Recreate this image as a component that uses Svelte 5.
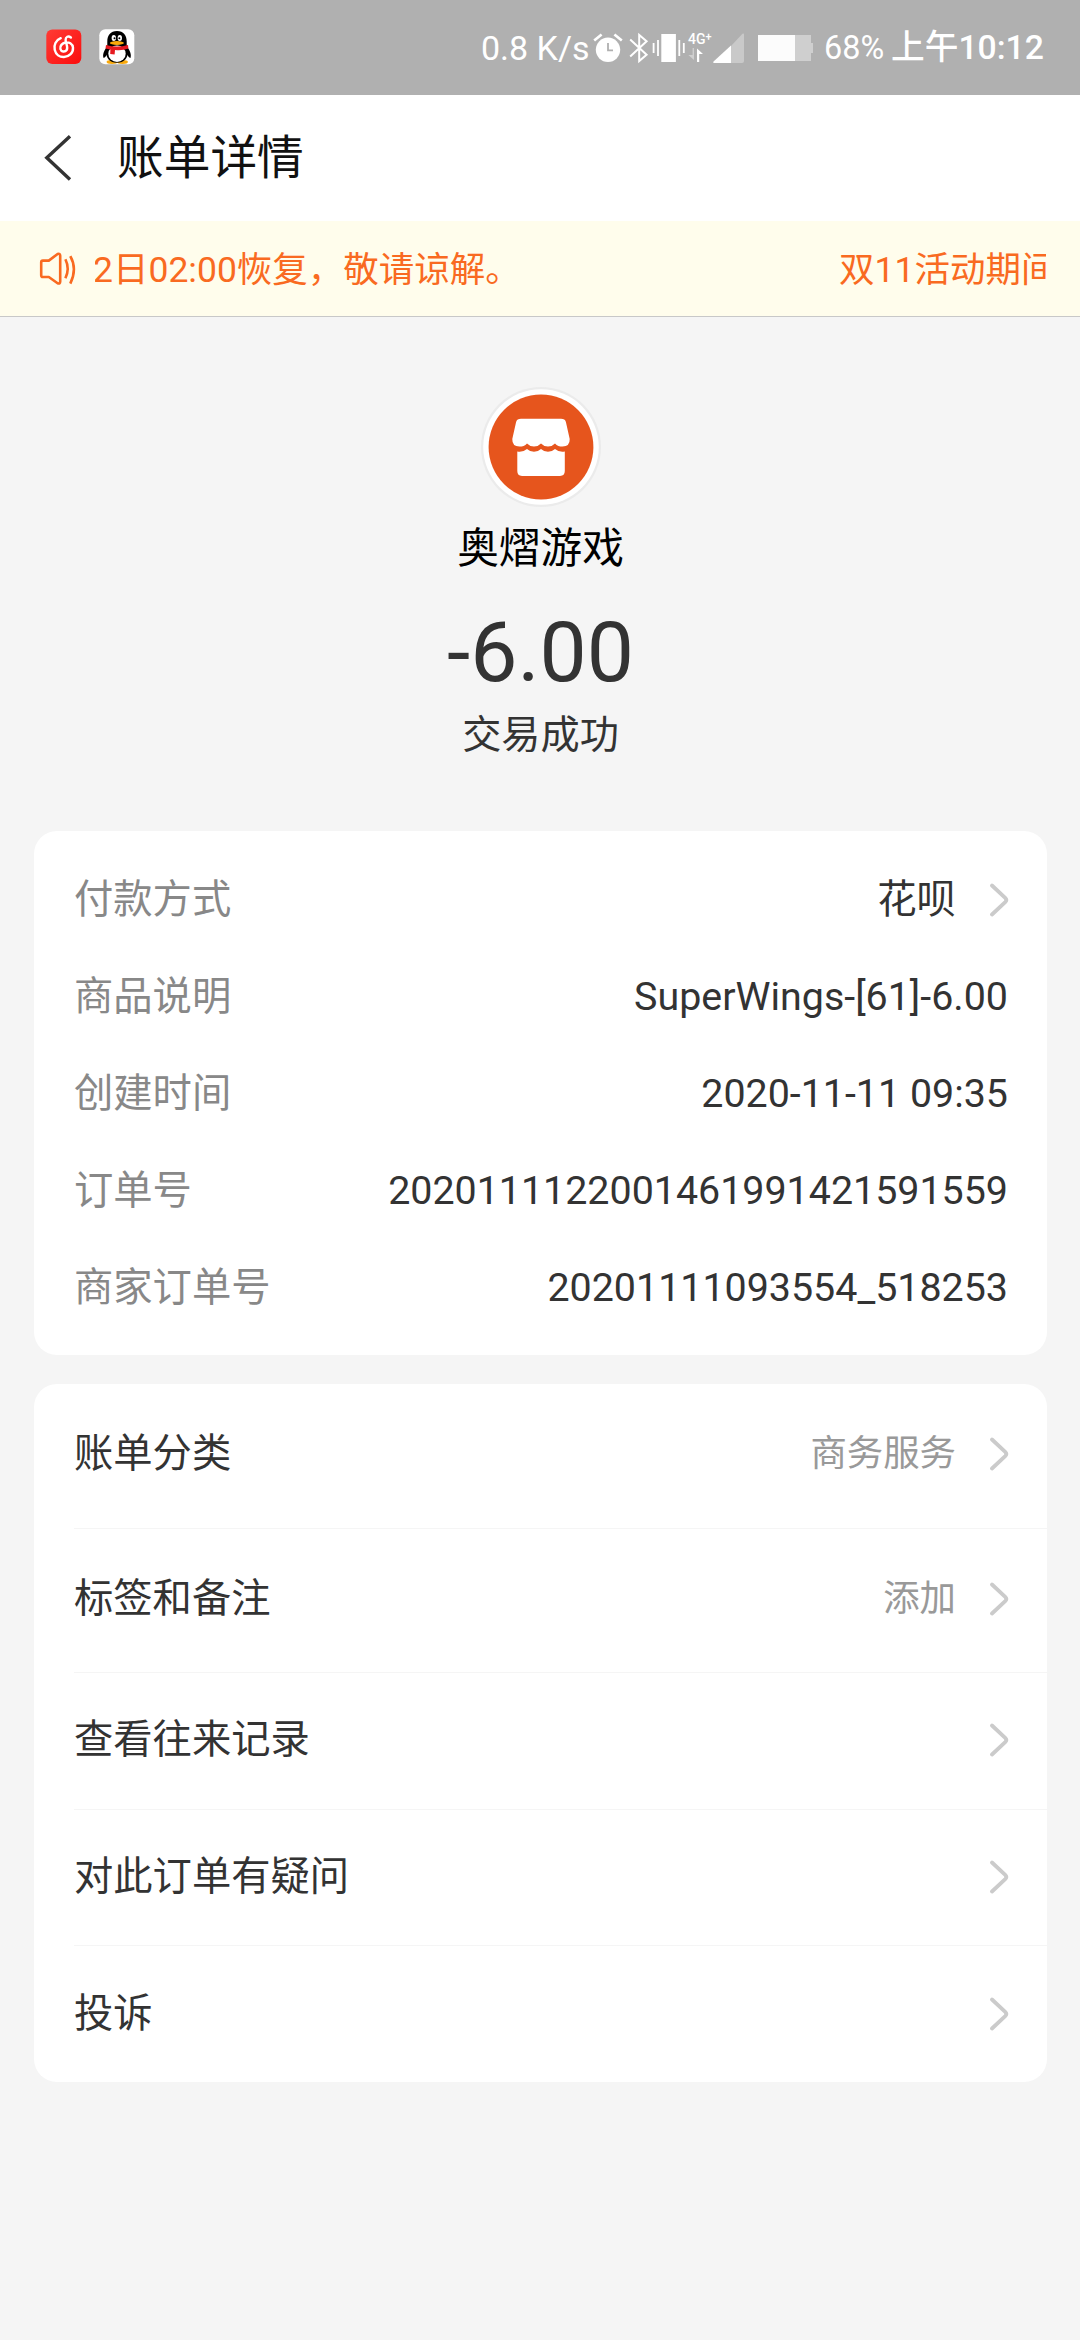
<script>
  const details = [
    { label: '付款方式', value: '花呗', link: true },
    { label: '商品说明', value: 'SuperWings-[61]-6.00' },
    { label: '创建时间', value: '2020-11-11 09:35' },
    { label: '订单号', value: '2020111122001461991421591559' },
    { label: '商家订单号', value: '20201111093554_518253' }
  ];

  const actions = [
    { label: '账单分类', value: '商务服务', tall: true },
    { label: '标签和备注', value: '添加', tall: true },
    { label: '查看往来记录' },
    { label: '对此订单有疑问' },
    { label: '投诉' }
  ];
</script>

{#snippet chevron()}
  <svg class="chevron" width="20" height="36" viewBox="0 0 20 36">
    <path d="M3 3.5 L16.2 15.8 Q18.4 18 16.2 20.2 L3 32.5" />
  </svg>
{/snippet}

<div class="screen">
  <header class="status">
    <div class="apps">
      <svg width="36" height="36" viewBox="0 0 36 36">
        <defs>
          <linearGradient id="red" x1="0" y1="0" x2="1" y2="1">
            <stop offset="0" stop-color="#ff3b35" />
            <stop offset="1" stop-color="#fb0d0d" />
          </linearGradient>
        </defs>
        <rect x="0.3" y="0.5" width="35" height="34.5" rx="6" fill="url(#red)" />
        <path
          d="M14.7 9.2 C9.8 11.2 7.6 16 8.7 20.7 C9.8 25.5 13.7 28.2 18 28 C23.3 27.7 27.3 23.8 27 18.8 C26.7 14.7 22.7 12.8 19.5 13.5 C16.2 14.2 13.6 17 14.4 20 C15.2 23 19 23.4 20.7 21 C22.5 18.4 19.8 14.6 19.6 11 C19.5 7.7 22.3 6.5 24.9 8.5"
          fill="none" stroke="#fff" stroke-width="2.4" stroke-linecap="round"
        />
      </svg>
      <svg width="36" height="36" viewBox="0 0 36 36">
        <rect x="0.3" y="0.2" width="35" height="35" rx="6" fill="#fff" />
        <ellipse cx="13" cy="33" rx="5.4" ry="1.9" fill="#f9a90b" />
        <ellipse cx="23.5" cy="33" rx="5.4" ry="1.9" fill="#f9a90b" />
        <path d="M8.6 17 C4.5 22 3.4 26 4.6 29 C6 29 7 27 8 25.6 M27.4 17 C31.6 22 32.5 26 31.5 29 C30 29 29 27 28 25.6" fill="#000" />
        <path d="M18 2 C11.5 2 8.3 6.5 8.3 12.5 L8.3 16 L7 22 C7 29.5 11 33.7 18 33.7 C25 33.7 29 29.5 29 22 L27.7 16 L27.7 12.5 C27.7 6.5 24.5 2 18 2 Z" fill="#000" />
        <ellipse cx="18" cy="24.8" rx="8.7" ry="8.2" fill="#fff" />
        <path d="M7 16 Q18 19 29 16 L29.4 19.5 Q23 22 16 21 L15.6 25.6 L11.2 25 L11.4 20.6 L6.5 19.5 Z" fill="#e6191f" />
        <ellipse cx="14.8" cy="9" rx="2.2" ry="3" fill="#fff" />
        <ellipse cx="20.8" cy="9" rx="2.2" ry="3" fill="#fff" />
        <circle cx="15.5" cy="9.3" r="1" fill="#000" />
        <circle cx="20.4" cy="9.3" r="1" fill="#000" />
        <ellipse cx="17.9" cy="14" rx="7" ry="1.9" fill="#f9a90b" />
      </svg>
    </div>

    <div class="indicators">
      <span class="speed">0.8 K/s</span>
      <svg class="alarm" width="30" height="32" viewBox="0 0 30 32">
        <path d="M1.2 8.6 L8.6 2.4 M28.8 8.6 L21.4 2.4" stroke="#fff" stroke-width="2.6" fill="none" />
        <circle cx="15" cy="17.8" r="12.2" fill="#fff" />
        <path d="M15 11 V18.4 H20" stroke="#b0b0b0" stroke-width="1.8" fill="none" />
      </svg>
      <svg class="bluetooth" width="20" height="32" viewBox="0 0 20 32">
        <path d="M1.2 7.5 L17.6 22.8 L10.2 29 V3 L17.6 9.2 L1.2 24.4" stroke="#fff" stroke-width="2" fill="none" />
      </svg>
      <svg class="vibrate" width="34" height="32" viewBox="0 0 34 32">
        <rect x="9.3" y="2" width="14.6" height="28" fill="#fff" />
        <path d="M1.6 11 V21 M6 8 V24 M27.3 8 V24 M31.8 11 V21" stroke="#fff" stroke-width="1.8" />
      </svg>
      <div class="network">
        <span class="generation">4G<sup>+</sup></span>
        <svg width="18" height="14" viewBox="0 0 18 14">
          <path d="M6 0 V12 L0.4 7 H4.6 V0 Z" fill="#d0d0d0" />
          <path d="M9 14 V0.5 L15 6 H11.2 V14 Z" fill="#fff" />
        </svg>
      </div>
      <svg class="signal" width="32" height="32" viewBox="0 0 32 32">
        <path d="M18 14 L29.5 1.8 Q31 0.8 31 2.5 V29 Q31 31 29 31 H18 Z" fill="#c9c9c9" />
        <path d="M18 13.6 V31 H1 Q-0.5 30.6 0.8 29.2 Z" fill="#fff" />
      </svg>
      <svg class="battery" width="56" height="28" viewBox="0 0 56 28">
        <rect x="0" y="1" width="53" height="26" fill="#cfcfcf" />
        <rect x="53" y="9" width="2" height="10" fill="#cfcfcf" />
        <rect x="0" y="1" width="37" height="26" fill="#fcfcfc" />
      </svg>
      <span class="percent">68%</span>
      <span class="clock">上午10:12</span>
    </div>
  </header>

  <nav class="title-bar">
    <svg class="back" width="28" height="48" viewBox="0 0 28 48">
      <path d="M26 2.3 L2.8 23.8 L26 45.4" fill="none" stroke="#333" stroke-width="3.4" />
    </svg>
    <h1>账单详情</h1>
  </nav>

  <section class="notice">
    <svg width="38" height="36" viewBox="0 0 38 36">
      <g fill="none" stroke="#f96a21" stroke-width="2.6" stroke-linejoin="round">
        <path d="M3.8 9.6 H9.8 L18.6 3 Q21.2 2 21.2 5 V30.5 Q21.2 33.4 18.6 32.2 L9.8 26 H3.8 Q2.2 26 2.2 24.2 V11.4 Q2.2 9.6 3.8 9.6 Z" />
        <path d="M26.4 8.3 Q31 17.8 26.4 27.3" />
        <path d="M31.3 5.2 Q38.5 17.8 31.3 32.6" />
      </g>
    </svg>
    <div class="ticker">
      <span class="leaving">2日02:00恢复，敬请谅解。</span>
      <span class="entering">双11活动期间</span>
    </div>
  </section>

  <section class="summary">
    <svg width="120" height="120" viewBox="0 0 120 120">
      <circle cx="60" cy="60" r="60" fill="#ebebeb" />
      <circle cx="60" cy="60" r="57.8" fill="#fff" />
      <circle cx="60" cy="60" r="52.4" fill="#e6551d" />
      <path
        d="M40 31.7 H80 Q84 31.7 84.9 35 L88.7 52 Q89 59.4 81.5 59.6 Q77 59.6 74 56.4 Q71 59.6 67 59.6 Q63 59.6 60 56.4 Q57 59.6 53 59.6 Q49 59.6 46 56.4 Q43 59.6 38.5 59.6 Q31 59.4 31.3 52 L35.1 35 Q36 31.7 40 31.7 Z"
        fill="#fff"
      />
      <path
        d="M36.3 64.5 Q42 65.5 46 62 Q49 64.8 53 64.8 Q57 64.8 60 62 Q63 64.8 67 64.8 Q71 64.8 74 62 Q78 65.5 83.8 64.5 V84 Q83.8 88.9 79 88.9 H41 Q36.3 88.9 36.3 84 Z"
        fill="#fff"
      />
    </svg>
    <p class="merchant">奥熠游戏</p>
    <p class="amount">-6.00</p>
    <p class="result">交易成功</p>
  </section>

  <section class="card details">
    {#each details as row}
      <div class="row">
        <span class="label">{row.label}</span>
        <span class="value">{row.value}</span>
        {#if row.link}{@render chevron()}{/if}
      </div>
    {/each}
  </section>

  <section class="card actions">
    {#each actions as row}
      <div class="row" class:tall={row.tall}>
        <span class="label">{row.label}</span>
        {#if row.value}<span class="value">{row.value}</span>{/if}
        {@render chevron()}
      </div>
    {/each}
  </section>
</div>

<style>
  :global(body) {
    margin: 0;
    background: #f5f5f5;
  }
  .screen {
    width: 1080px;
    height: 2340px;
    overflow: hidden;
    background: #f5f5f5;
    color: #333;
    font-family: Roboto, 'Noto Sans CJK SC', sans-serif;
  }
  svg {
    display: block;
    flex: none;
  }
  h1,
  p {
    margin: 0;
    font-weight: 400;
  }
  span {
    white-space: nowrap;
  }

  .status {
    display: flex;
    justify-content: space-between;
    box-sizing: border-box;
    height: 95px;
    padding: 0 36px 0 46px;
    background: #b0b0b0;
    color: #fff;
  }
  .apps {
    display: flex;
    gap: 17px;
    padding-top: 29px;
  }
  .indicators {
    display: flex;
    align-items: center;
    line-height: 40px;
  }
  .speed {
    width: 112px;
    font-size: 34px;
  }
  .alarm {
    width: 30px;
  }
  .bluetooth {
    margin-left: 6px;
  }
  .vibrate {
    margin-left: 3px;
  }
  .network {
    display: flex;
    flex-direction: column;
    gap: 3px;
    width: 20px;
    margin-left: 2px;
  }
  .generation {
    height: 12px;
    font-size: 14px;
    font-weight: 500;
    line-height: 12px;
  }
  .generation sup {
    font-size: 11px;
    line-height: 0;
    vertical-align: 4px;
  }
  .signal {
    margin-left: 5px;
  }
  .battery {
    margin-left: 13px;
  }
  .percent {
    width: 67px;
    margin-left: 10px;
    font-size: 32.4px;
  }
  .clock {
    width: 153px;
    font-size: 33.7px;
    font-weight: 500;
  }

  .title-bar {
    display: flex;
    align-items: center;
    box-sizing: border-box;
    height: 126px;
    padding-left: 44px;
    background: #fff;
  }
  h1 {
    margin-left: 45px;
    color: #111;
    font-size: 46.7px;
    line-height: 60px;
  }

  .notice {
    display: flex;
    align-items: center;
    box-sizing: border-box;
    height: 96px;
    padding: 0 34px 0 39px;
    border-bottom: 1px solid #c8c8c8;
    background: #fffdec;
    color: #f96a21;
    font-size: 35.5px;
    line-height: 50px;
  }
  .ticker {
    display: flex;
    justify-content: space-between;
    width: 951px;
    margin-left: 18px;
    padding-top: 2px;
    overflow: hidden;
  }
  .leaving {
    margin-left: -2px;
  }
  .entering {
    width: 207px;
  }

  .summary {
    display: flex;
    flex-direction: column;
    align-items: center;
    box-sizing: border-box;
    height: 514px;
    padding: 70px 0 0 1px;
  }
  .merchant {
    margin-top: 12px;
    color: #000;
    font-size: 41.7px;
    line-height: 60px;
  }
  .amount {
    margin-top: 24px;
    font-size: 84px;
    line-height: 100px;
  }
  .result {
    margin-top: 6px;
    font-size: 39.2px;
    line-height: 52px;
  }

  .card {
    box-sizing: border-box;
    margin: 0 33px 0 34px;
    overflow: hidden;
    border-radius: 23px;
    background: #fff;
  }
  .row {
    display: flex;
    align-items: center;
    box-sizing: border-box;
    font-size: 39.3px;
    line-height: 52px;
  }
  .label {
    flex: 1;
  }
  .chevron {
    margin-left: 33px;
  }
  .chevron path {
    fill: none;
    stroke: #cbcbcb;
    stroke-width: 3.8;
    stroke-linecap: round;
  }

  .details {
    height: 524px;
    padding: 20px 39px 0 40px;
  }
  .details .row {
    height: 97px;
  }
  .details .label {
    color: #888;
  }
  .details .value {
    font-size: 39.4px;
  }
  .details .chevron {
    margin-right: -1px;
  }

  .actions {
    height: 698px;
    margin-top: 29px;
    padding-left: 40px;
  }
  .actions .row {
    height: 136.5px;
    padding-right: 38px;
    padding-bottom: 1px;
    border-bottom: 1px solid #f5f5f5;
  }
  .actions .row.tall {
    height: 144.5px;
    padding-bottom: 3px;
  }
  .actions .row:last-child {
    border-bottom: 0;
  }
  .actions .value {
    color: #999;
    font-size: 36.4px;
  }
</style>
